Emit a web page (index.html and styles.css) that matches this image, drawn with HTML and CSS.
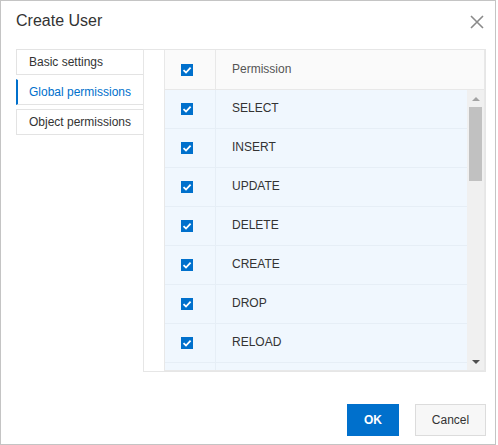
FILE: index.html
```html
<!DOCTYPE html>
<html>
<head>
<meta charset="utf-8">
<link rel="stylesheet" href="styles.css">
</head>
<body>
<div class="dialog">
  <div class="header">
    <div class="title">Create User</div>
    <svg class="close" width="14" height="14" viewBox="0 0 14 14"><path d="M1 1 L13 13 M13 1 L1 13" stroke="#8a8a8a" stroke-width="1.6" fill="none"/></svg>
  </div>
  <div class="main">
    <div class="tabs">
      <div class="tab">Basic settings</div>
      <div class="tab active">Global permissions</div>
      <div class="tab">Object permissions</div>
    </div>
    <div class="panel">
      <div class="table">
        <div class="thead">
          <div class="cell-check"><span class="cb"><svg width="12" height="12" viewBox="0 0 12 12"><path d="M2.5 6.2 L5 8.5 L9.6 3.6" stroke="#fff" stroke-width="1.8" fill="none"/></svg></span></div>
          <div class="cell-name">Permission</div>
        </div>
        <div class="tbody">
          <div class="rows">
            <div class="row"><div class="cell-check"><span class="cb"><svg width="12" height="12" viewBox="0 0 12 12"><path d="M2.5 6.2 L5 8.5 L9.6 3.6" stroke="#fff" stroke-width="1.8" fill="none"/></svg></span></div><div class="cell-name">SELECT</div></div>
            <div class="row"><div class="cell-check"><span class="cb"><svg width="12" height="12" viewBox="0 0 12 12"><path d="M2.5 6.2 L5 8.5 L9.6 3.6" stroke="#fff" stroke-width="1.8" fill="none"/></svg></span></div><div class="cell-name">INSERT</div></div>
            <div class="row"><div class="cell-check"><span class="cb"><svg width="12" height="12" viewBox="0 0 12 12"><path d="M2.5 6.2 L5 8.5 L9.6 3.6" stroke="#fff" stroke-width="1.8" fill="none"/></svg></span></div><div class="cell-name">UPDATE</div></div>
            <div class="row"><div class="cell-check"><span class="cb"><svg width="12" height="12" viewBox="0 0 12 12"><path d="M2.5 6.2 L5 8.5 L9.6 3.6" stroke="#fff" stroke-width="1.8" fill="none"/></svg></span></div><div class="cell-name">DELETE</div></div>
            <div class="row"><div class="cell-check"><span class="cb"><svg width="12" height="12" viewBox="0 0 12 12"><path d="M2.5 6.2 L5 8.5 L9.6 3.6" stroke="#fff" stroke-width="1.8" fill="none"/></svg></span></div><div class="cell-name">CREATE</div></div>
            <div class="row"><div class="cell-check"><span class="cb"><svg width="12" height="12" viewBox="0 0 12 12"><path d="M2.5 6.2 L5 8.5 L9.6 3.6" stroke="#fff" stroke-width="1.8" fill="none"/></svg></span></div><div class="cell-name">DROP</div></div>
            <div class="row"><div class="cell-check"><span class="cb"><svg width="12" height="12" viewBox="0 0 12 12"><path d="M2.5 6.2 L5 8.5 L9.6 3.6" stroke="#fff" stroke-width="1.8" fill="none"/></svg></span></div><div class="cell-name">RELOAD</div></div>
            <div class="row"><div class="cell-check"></div><div class="cell-name"></div></div>
          </div>
          <div class="scrollbar">
            <div class="sb-btn"><span class="arrow-up"></span></div>
            <div class="sb-track"><div class="sb-thumb"></div></div>
            <div class="sb-btn"><span class="arrow-down"></span></div>
          </div>
        </div>
      </div>
    </div>
  </div>
  <div class="footer">
    <button class="btn btn-primary">OK</button>
    <button class="btn btn-default">Cancel</button>
  </div>
</div>
</body>
</html>
```

FILE: styles.css
```css
* { box-sizing: border-box; }
html, body { margin: 0; padding: 0; background: #fff; }
body { font-family: "Liberation Sans", Arial, sans-serif; color: #333; }

.dialog {
  width: 496px;
  height: 445px;
  border: 1px solid #c4c4c4;
  background: #fff;
  padding: 0 9px 0 15px;
  display: flex;
  flex-direction: column;
}

.header {
  height: 48px;
  padding-top: 10px;
  display: flex;
  justify-content: space-between;
  align-items: flex-start;
}
.title { font-size: 16px; line-height: 20px; color: #333; }
.close { margin-top: 4px; margin-right: 2px; display: block; }

.main { display: flex; height: 323px; }

.tabs { width: 127px; display: flex; flex-direction: column; gap: 4px; }
.tab {
  height: 26px;
  border: 1px solid #e3e3e3;
  border-right: none;
  padding-left: 12px;
  font-size: 12px;
  line-height: 24px;
  color: #333;
  background: #fff;
}
.tab.active {
  border-left: 2px solid #0070cc;
  border-top-color: #fff;
  padding-left: 11px;
  color: #0070cc;
}

.panel {
  width: 343px;
  height: 323px;
  border: 1px solid #e6e6e6;
  padding-left: 20px;
}

.table {
  height: 321px;
  border: 1px solid #e8e8e8;
  border-top: none;
  display: flex;
  flex-direction: column;
}

.thead {
  height: 40px;
  background: #fafafa;
  border-bottom: 1px solid #e8e8e8;
  display: flex;
  flex: none;
}
.cell-check {
  width: 51px;
  flex: none;
  border-right: 1px solid #e8e8e8;
  padding-left: 16px;
  display: flex;
  align-items: center;
}
.cell-name {
  padding-left: 16px;
  padding-bottom: 2px;
  font-size: 12px;
  display: flex;
  align-items: center;
}
.thead .cell-name { color: #555; }

.cb {
  width: 12px;
  height: 12px;
  background: #0070cc;
  display: block;
}
.cb svg { display: block; }

.tbody { flex: 1; display: flex; min-height: 0; }
.rows { flex: 1; overflow: hidden; background: #f0f7fe; }
.row {
  height: 39px;
  border-bottom: 1px solid #e6eef6;
  display: flex;
}
.row .cell-check { border-right-color: #e6eef6; }
.row .cell-name { color: #333; }

.scrollbar {
  width: 17px;
  flex: none;
  background: #f0f0f0;
  display: flex;
  flex-direction: column;
}
.sb-btn {
  height: 17px;
  flex: none;
  display: flex;
  align-items: center;
  justify-content: center;
}
.arrow-up {
  width: 0; height: 0;
  border-left: 4px solid transparent;
  border-right: 4px solid transparent;
  border-bottom: 4px solid #a3a3a3;
}
.arrow-down {
  width: 0; height: 0;
  border-left: 4px solid transparent;
  border-right: 4px solid transparent;
  border-top: 4px solid #505050;
}
.sb-track { flex: 1; padding: 0 2px; }
.sb-thumb { height: 74px; background: #c1c1c1; }

.footer {
  display: flex;
  justify-content: flex-end;
  gap: 16px;
  padding-top: 32px;
}
.btn {
  height: 32px;
  font-family: "Liberation Sans", Arial, sans-serif;
  font-size: 12px;
  border-radius: 0;
  padding: 0;
  cursor: pointer;
}
.btn-primary {
  width: 52px;
  background: #0070cc;
  border: 1px solid #0070cc;
  color: #fff;
  font-weight: bold;
}
.btn-default {
  width: 71px;
  background: #f7f7f7;
  border: 1px solid #dcdcdc;
  color: #333;
}
```
